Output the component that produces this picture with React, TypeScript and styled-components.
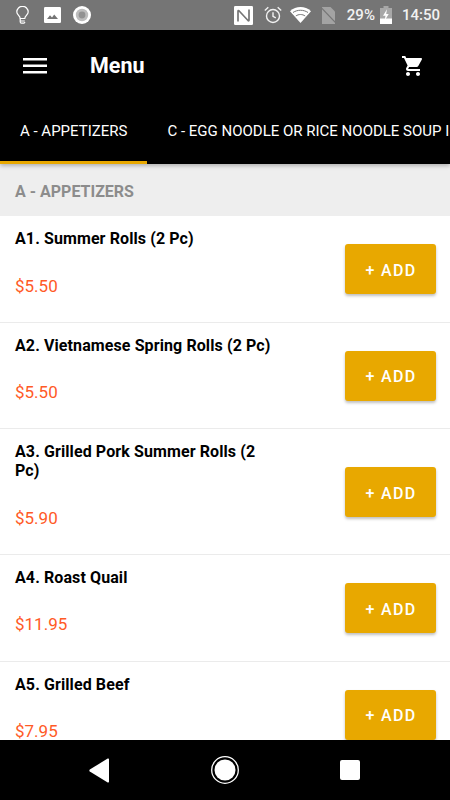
import React from 'react'
import styled, { createGlobalStyle } from 'styled-components'

const GlobalStyle = createGlobalStyle`
  html, body {
    margin: 0;
    padding: 0;
    background: #fff;
  }
  * {
    box-sizing: border-box;
  }
`

const Screen = styled.div`
  width: 450px;
  height: 800px;
  display: flex;
  flex-direction: column;
  overflow: hidden;
  font-family: Roboto, "Liberation Sans", sans-serif;
  background: #fff;
`

const StatusBar = styled.div`
  height: 30px;
  flex: none;
  background: #757575;
  display: flex;
  align-items: center;
  padding: 0 10px 0 16px;
  color: #fff;
`

const StatusSpacer = styled.div`
  flex: 1;
`

const StatusIcon = styled.span<{ $gap: number; $before?: number }>`
  display: flex;
  flex: none;
  margin-left: ${p => p.$before ?? 0}px;
  margin-right: ${p => p.$gap}px;
`

const StatusText = styled.span`
  font-size: 15px;
  font-weight: 500;
  color: #f2f2f2;
  line-height: 30px;
`

const Header = styled.header`
  height: 70px;
  flex: none;
  background: #000;
  display: flex;
  align-items: center;
  padding: 1px 25px 0 23px;
  color: #fff;
`

const Title = styled.h1`
  margin: 0 0 0 43px;
  flex: 1;
  font-size: 21.5px;
  font-weight: 700;
  line-height: 24px;
`

const TabBar = styled.nav`
  height: 64px;
  flex: none;
  background: #000;
  display: flex;
  overflow: hidden;
  position: relative;
  z-index: 2;
  box-shadow: 0 2px 4px rgba(0, 0, 0, 0.25);
`

const Tab = styled.div<{ $active?: boolean }>`
  flex: none;
  height: 64px;
  padding: 0 20px;
  display: flex;
  align-items: center;
  color: #fff;
  font-size: 15px;
  white-space: nowrap;
  border-top: 1px solid transparent;
  border-bottom: 3px solid ${p => (p.$active ? '#e8a800' : 'transparent')};
`

const List = styled.main`
  flex: 1;
  min-height: 0;
  overflow: hidden;
`

const SectionHead = styled.div`
  height: 52px;
  background: #eeeeee;
  padding: 2px 15px 0;
  display: flex;
  align-items: center;
  font-size: 16px;
  font-weight: 700;
  color: #8c8c8c;
`

const Row = styled.div<{ $tall?: boolean }>`
  height: ${p => (p.$tall ? 125.67 : 106.67)}px;
  padding: 1px 14px 0 15px;
  border-bottom: 1px solid #ebebeb;
  display: flex;
  justify-content: space-between;
  align-items: center;
`

const RowInfo = styled.div`
  align-self: stretch;
  width: 260px;
  padding-top: 12px;
`

const ItemName = styled.div`
  font-size: 16px;
  font-weight: 700;
  line-height: 19px;
  letter-spacing: 0.1px;
  color: #000;
`

const Price = styled.div`
  margin-top: 26.5px;
  font-size: 17px;
  line-height: 22px;
  color: #ff5a26;
`

const AddButton = styled.button`
  width: 91px;
  height: 50px;
  flex: none;
  padding: 2px 0 0 1px;
  border: 0;
  border-radius: 3px;
  background: #e8a800;
  color: #fff;
  font-family: inherit;
  font-size: 16px;
  font-weight: 500;
  letter-spacing: 1.3px;
  box-shadow: 0 2px 3px rgba(0, 0, 0, 0.25);
`

const NavBar = styled.footer`
  height: 60px;
  flex: none;
  background: #000;
  display: flex;
  align-items: center;
  position: relative;
  z-index: 2;
  padding-left: 89px;
`

const NavSlot = styled.div<{ $width: number }>`
  width: ${p => p.$width}px;
  flex: none;
  display: flex;
  align-items: center;
`

const items = [
  { name: 'A1. Summer Rolls (2 Pc)', price: '$5.50' },
  { name: 'A2. Vietnamese Spring Rolls (2 Pc)', price: '$5.50' },
  { name: 'A3. Grilled Pork Summer Rolls (2 Pc)', price: '$5.90', tall: true },
  { name: 'A4. Roast Quail', price: '$11.95' },
  { name: 'A5. Grilled Beef', price: '$7.95' },
]

const App: React.FC = () => {
  return (
    <Screen>
      <GlobalStyle />
      <StatusBar>
        <StatusIcon $gap={15}>
          <svg width="13" height="18" viewBox="0 0 13 18" fill="none" stroke="#fff" strokeWidth="1.2">
            <path d="M4.200 12.500C4.200 10 .8 8.800.8 6a5.700 5.700 0 0 1 11.400 0c0 2.800-3.400 4-3.400 6.500z" />
            <path d="M4.200 12.500v3.200c0 .9.600 1.500 1.300 1.500h2.300c.7 0 1-.5 1-1.200M4.200 15h4.600" />
          </svg>
        </StatusIcon>
        <StatusIcon $gap={12}>
          <svg width="17" height="16" viewBox="0 0 17 16">
            <rect width="17" height="16" rx="1.200" fill="#fff" />
            <path d="M3 12l3-3.800 2 2.300 2.200-3L14 12z" fill="#757575" />
          </svg>
        </StatusIcon>
        <StatusIcon $gap={0}>
          <svg width="18" height="18" viewBox="0 0 18 18">
            <circle cx="9" cy="9" r="9" fill="#fff" />
            <circle cx="9" cy="9" r="6.200" fill="#bdbdbd" />
            <circle cx="9" cy="9" r="3.400" fill="#929292" />
          </svg>
        </StatusIcon>
        <StatusSpacer />
        <StatusIcon $gap={11}>
          <svg width="19" height="19" viewBox="0 0 19 19">
            <rect width="19" height="19" rx="1.200" fill="#fff" />
            <path d="M4 15.500V5.500q0-1.500 1.200-.5L14 14.500q1 .8 1-.5V3.500" fill="none" stroke="#757575" strokeWidth="1.700" />
          </svg>
        </StatusIcon>
        <StatusIcon $gap={8}>
          <svg width="18" height="18" viewBox="0 0 18 18" fill="none" stroke="#f2f2f2" strokeWidth="1.400">
            <circle cx="9" cy="10" r="6.500" />
            <path d="M9 6.200v4.200l2.800 1.500M.8 4.500L4.300 1.300M17.200 4.500L13.700 1.300" />
          </svg>
        </StatusIcon>
        <StatusIcon $gap={10}>
          <svg width="21" height="16" viewBox="0 0 21 16">
            <path d="M10.500 16L0 4.200C6-1.400 15-1.400 21 4.200z" fill="#fff" />
            <path d="M3 5.500c4.300-3 10.700-3 15 0M5.800 9c2.800-2 6.600-2 9.400 0" fill="none" stroke="#757575" strokeWidth="1" />
          </svg>
        </StatusIcon>
        <StatusIcon $gap={11}>
          <svg width="15" height="17" viewBox="0 0 15 17">
            <path d="M1 17V0h8.500L14 4.500V17z" fill="#a3a3a3" />
            <path d="M0 .5L15 16" stroke="#757575" strokeWidth="1.200" />
          </svg>
        </StatusIcon>
        <StatusText>29%</StatusText>
        <StatusIcon $gap={10} $before={5}>
          <svg width="12" height="18" viewBox="0 0 12 18">
            <path d="M3.500 0h5v2H12v16H0V2h3.500z" fill="#a8a8a8" />
            <path d="M0 12.500h12V18H0z" fill="#fff" />
            <path d="M7 3.200L3 9.800h2.500L4.500 15l4.200-7H6.200z" fill="#fff" />
          </svg>
        </StatusIcon>
        <StatusText>14:50</StatusText>
      </StatusBar>

      <Header>
        <svg width="24" height="16" viewBox="0 0 24 16" fill="#fff">
          <rect y="0" width="24" height="2.500" />
          <rect y="6.500" width="24" height="2.500" />
          <rect y="13" width="24" height="2.500" />
        </svg>
        <Title>Menu</Title>
        <svg width="24" height="24" viewBox="0 0 24 24" fill="#fff">
          <path d="M7 18c-1.100 0-1.990.9-1.990 2S5.900 22 7 22s2-.9 2-2-.9-2-2-2zM1 2v2h2l3.600 7.590-1.350 2.450c-.16.280-.25.610-.25.960 0 1.100.9 2 2 2h12v-2H7.420c-.14 0-.25-.11-.25-.25l.03-.12.900-1.630h7.450c.750 0 1.410-.41 1.750-1.030l3.580-6.490A1 1 0 0 0 20.010 4H5.210l-.94-2H1zm16 16c-1.100 0-1.990.9-1.990 2s.89 2 1.990 2 2-.9 2-2-.9-2-2-2z" />
        </svg>
      </Header>

      <TabBar>
        <Tab $active>A - APPETIZERS</Tab>
        <Tab>C - EGG NOODLE OR RICE NOODLE SOUP IN</Tab>
      </TabBar>

      <List>
        <SectionHead>A - APPETIZERS</SectionHead>
        {items.map(item => (
          <Row key={item.name} $tall={item.tall}>
            <RowInfo>
              <ItemName>{item.name}</ItemName>
              <Price>{item.price}</Price>
            </RowInfo>
            <AddButton>+ ADD</AddButton>
          </Row>
        ))}
      </List>

      <NavBar>
        <NavSlot $width={122}>
          <svg width="21" height="25" viewBox="0 0 21 25" fill="#fff">
            <path d="M20 1.500v22c0 .8-.7 1.200-1.300.9L.8 13.600c-.6-.4-.6-1.800 0-2.200L18.700.6c.6-.3 1.300.1 1.300.9z" />
          </svg>
        </NavSlot>
        <NavSlot $width={129}>
          <svg width="28" height="28" viewBox="0 0 28 28">
            <circle cx="14" cy="14" r="13.300" fill="none" stroke="#fff" strokeWidth="1.300" />
            <circle cx="14" cy="14" r="10.500" fill="#fff" />
          </svg>
        </NavSlot>
        <NavSlot $width={20}>
          <svg width="20" height="20" viewBox="0 0 20 20">
            <rect width="20" height="20" rx="2" fill="#fff" />
          </svg>
        </NavSlot>
      </NavBar>
    </Screen>
  )
}

export default App
